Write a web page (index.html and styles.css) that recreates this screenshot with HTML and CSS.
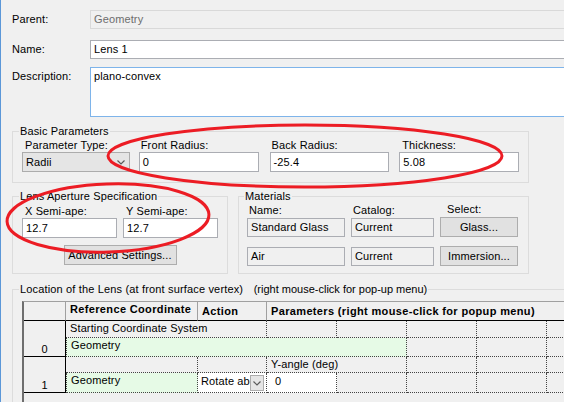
FILE: index.html
```html
<!DOCTYPE html>
<html>
  <head>
    <meta charset="utf-8">
    <link rel="stylesheet" href="styles.css">
  </head>
  <body>
    <div id="dlg">
      <div class="row">
        <span class="lbl">Parent:</span>
        <div class="field disabled">Geometry</div>
      </div>
      <div class="row name">
        <span class="lbl">Name:</span>
        <div class="field">Lens 1</div>
      </div>
      <div class="row desc">
        <span class="lbl">Description:</span>
        <div class="field memo">plano-convex</div>
      </div>

      <!-- basic parameters -->
      <fieldset class="grp basic">
        <legend>Basic Parameters</legend>
        <div class="cols">
          <div class="col c-type">
            <label>Parameter Type:</label>
            <div class="combo">
              <span>Radii</span>
              <svg class="chev" width="8" height="5" viewBox="0 0 8 5"><polyline points="0.5,0.5 4,4 7.5,0.5"/></svg>
            </div>
          </div>
          <div class="col c-front">
            <label>Front Radius:</label>
            <div class="edit">0</div>
          </div>
          <div class="col c-back">
            <label>Back Radius:</label>
            <div class="edit">-25.4</div>
          </div>
          <div class="col c-thick">
            <label>Thickness:</label>
            <div class="edit">5.08</div>
          </div>
        </div>
      </fieldset>

      <div class="pair">
        <fieldset class="grp aperture">
          <legend>Lens Aperture Specification</legend>
          <div class="cols">
            <div class="col c-x">
              <label>X Semi-ape:</label>
              <div class="edit">12.7</div>
            </div>
            <div class="col c-y">
              <label>Y Semi-ape:</label>
              <div class="edit">12.7</div>
            </div>
          </div>
          <button class="btn adv">Advanced Settings...</button>
        </fieldset>

        <fieldset class="grp materials">
          <legend>Materials</legend>
          <div class="mat">
            <label>Name:</label>
            <label>Catalog:</label>
            <label class="sel">Select:</label>
            <div class="edit ro">Standard Glass</div>
            <div class="edit ro">Current</div>
            <button class="btn">Glass...</button>
            <div class="edit ro">Air</div>
            <div class="edit ro">Current</div>
            <button class="btn">Immersion...</button>
          </div>
        </fieldset>
      </div>

      <!-- coordinate grid -->
      <fieldset class="grp location">
        <legend>Location of the Lens (at front surface vertex)  <span class="hint">(right mouse-click for pop-up menu)</span></legend>
        <div class="grid">
          <div class="gh sep"></div>
          <div class="gh sep ref">Reference Coordinate</div>
          <div class="gh sep">Action</div>
          <div class="gh par">Parameters (right mouse-click for popup menu)</div>

          <div class="rh r0">0</div>
          <div class="gc start">Starting Coordinate System</div>
          <div class="gc"></div>
          <div class="gc"></div>
          <div class="gc"></div>
          <div class="gc"></div>
          <div class="gc"></div>
          <div class="gc green wide">Geometry</div>
          <div class="gc"></div>
          <div class="gc"></div>
          <div class="gc"></div>

          <div class="rh r1">1</div>
          <div class="gc"></div>
          <div class="gc"></div>
          <div class="gc yang">Y-angle (deg)</div>
          <div class="gc"></div>
          <div class="gc"></div>
          <div class="gc"></div>
          <div class="gc green edge">Geometry</div>
          <div class="gc white act-combo">
            <span class="txt">Rotate about</span>
            <span class="drop"><svg class="chev" width="8" height="5" viewBox="0 0 8 5"><polyline points="0.5,0.5 4,4 7.5,0.5"/></svg></span>
          </div>
          <div class="gc white zero">0</div>
          <div class="gc"></div>
          <div class="gc"></div>
          <div class="gc"></div>
          <div class="gc"></div>
        </div>
      </fieldset>
    </div>

    <svg class="marks" width="564" height="402" viewBox="0 0 564 402">
      <ellipse cx="305" cy="156" rx="197" ry="31"/>
      <ellipse cx="108" cy="218" rx="101" ry="34" transform="rotate(-2 108 218)"/>
    </svg>
  </body>
</html>
```

FILE: styles.css
```css
* { box-sizing: border-box; }
html, body { margin: 0; }
body {
  position: relative;
  width: 564px;
  height: 402px;
  overflow: hidden;
  background: #f0f0f0;
  font-family: "Liberation Sans", Arial, sans-serif;
  font-size: 11px;
  letter-spacing: 0.12px;
  color: #000;
}
#dlg {
  height: 100%;
  border-left: 1px solid #5b97d8;
  padding: 10px 0 0 11px;
}

/* top rows ================================== */
.row { display: flex; margin-right: -40px; }
.row.name { margin-top: 11px; }
.row.desc { margin-top: 8px; }
.lbl { flex: none; width: 78px; line-height: 19px; }
.field {
  flex: 1;
  height: 19px;
  padding: 0 3px;
  border: 1px solid #abadb3;
  background: #fff;
  line-height: 17px;
  white-space: nowrap;
}
.field.disabled { border-color: #d9d9d9; background: #f0f0f0; color: #6d6d6d; }
.field.memo { height: 50px; border-color: #7eb4ea; }

/* group boxes =============================== */
.grp {
  margin: 0;
  padding: 0 9px;
  border: 1px solid #dcdcdc;
  min-width: 0;
}
.grp legend {
  margin-left: -3px;
  padding: 0 1px;
  line-height: 14px;
  white-space: pre;
}
.cols { display: flex; }
.col { display: flex; flex-direction: column; }
.col label { line-height: 14px; padding-left: 2px; }

.edit {
  height: 20px;
  padding: 0 3px;
  border: 1px solid #abadb3;
  background: #fff;
  line-height: 18px;
  white-space: nowrap;
  overflow: hidden;
}
.combo {
  display: flex;
  align-items: center;
  justify-content: space-between;
  height: 20px;
  padding: 0 4px 0 3px;
  border: 1px solid #acacac;
  background: #e5e5e5;
}
.chev polyline { fill: none; stroke: #5a5a5a; stroke-width: 1.2; }
.btn {
  display: block;
  height: 20px;
  padding: 0;
  border: 1px solid #adadad;
  background: #e1e1e1;
  font: inherit;
  letter-spacing: inherit;
  color: #000;
}

.basic { width: 517px; margin-top: 7px; padding-bottom: 10px; }
.c-type { width: 108px; margin-right: 9px; }
.c-type label { padding-left: 3px; }
.c-front { width: 120px; margin-right: 11px; }
.c-back { width: 120px; margin-right: 10px; }
.c-thick { width: 120px; }
.c-thick label { padding-left: 3px; }

.pair { display: flex; margin-top: 6px; }
.aperture { width: 216px; padding: 2px 9px 8px; }
.aperture .col { width: 95px; }
.aperture .col label { line-height: 13px; padding-left: 3px; }
.c-x { margin-right: 6px; }
.adv { width: 113px; margin: 7px auto 0; }

.materials { width: 291px; margin-left: 10px; padding: 0 9px 0 8px; }
.mat {
  display: grid;
  grid-template-columns: 98px 83px 78px;
  grid-template-rows: 14px 20px 29px;
  column-gap: 6px;
  align-items: end;
}
.mat label { line-height: 14px; padding-left: 2px; }
.mat label.sel { padding-left: 7px; margin-bottom: 1px; }
.mat .ro { height: 19px; line-height: 17px; background: #f0f0f0; }

/* grid ====================================== */
.location { width: 620px; margin-top: 8px; padding: 5px 0 0 9px; border-bottom: none; }
.location legend { letter-spacing: 0.16px; }
.location .hint { letter-spacing: 0; margin-left: 4px; }
.grid {
  display: grid;
  grid-template-columns: 42px 132px 69px repeat(5, 70px);
  grid-template-rows: 19px 17px 19px 16px 20px;
  align-content: start;
  height: 120px;
  border-top: 1px solid #a0a0a0;
  border-left: 2px solid #6e6e6e;
}
.gh {
  padding-left: 4px;
  border-bottom: 1px solid #000;
  font-weight: bold;
  letter-spacing: 0.35px;
  line-height: 18px;
  white-space: nowrap;
  overflow: hidden;
}
.gh.sep { border-right: 1px solid #a0a0a0; }
.gh.ref { line-height: 15px; }
.gh.par { grid-column: span 5; }

.rh {
  grid-column: 1;
  display: flex;
  align-items: flex-end;
  justify-content: center;
  border-right: 1px solid #000;
  border-bottom: 1px solid #000;
  line-height: 14px;
}
.r0 { grid-row: 2 / 4; }
.r1 { grid-row: 4 / 6; }

.gc {
  padding-left: 4px;
  border-right: 1px dotted #444;
  border-bottom: 1px dotted #444;
  line-height: 14px;
  white-space: nowrap;
  overflow: hidden;
}
.gc.start { grid-column: span 2; line-height: 15px; }
.gc.wide { grid-column: span 4; }
.gc.yang { grid-column: span 2; }
.gc.green { background: #e6fae6; border-left: 1px dotted #444; }
.gc.white { background: #fff; }
.gc.zero { padding-left: 8px; line-height: 16px; }
.act-combo { display: flex; justify-content: space-between; padding-left: 3px; line-height: 16px; }
.act-combo .txt { overflow: hidden; }
.act-combo .drop {
  flex: none;
  display: flex;
  align-items: center;
  justify-content: center;
  width: 14px;
  height: 16px;
  margin: 2px 2px 0 0;
  border: 1px solid #acacac;
  background: #e5e5e5;
}

/* annotation marks ========================== */
.marks { position: absolute; top: 0; left: 0; pointer-events: none; }
.marks ellipse { fill: none; stroke: #ec1c24; stroke-width: 3; }
```
